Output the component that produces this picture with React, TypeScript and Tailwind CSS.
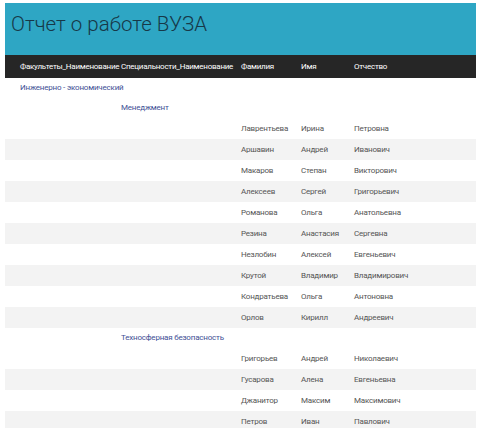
import React from "react";

type Row = { kind: "fac" | "spec" | "p"; a?: string; f?: string; i?: string; o?: string; shade?: boolean };

const rows: Row[] = [
  { kind: "fac", a: "Инженерно - экономический" },
  { kind: "spec", a: "Менеджмент" },
  { kind: "p", f: "Лаврентьева", i: "Ирина", o: "Петровна" },
  { kind: "p", f: "Аршавин", i: "Андрей", o: "Иванович", shade: true },
  { kind: "p", f: "Макаров", i: "Степан", o: "Викторович" },
  { kind: "p", f: "Алексеев", i: "Сергей", o: "Григорьевич", shade: true },
  { kind: "p", f: "Романова", i: "Ольга", o: "Анатольевна" },
  { kind: "p", f: "Резина", i: "Анастасия", o: "Сергевна", shade: true },
  { kind: "p", f: "Незлобин", i: "Алексей", o: "Евгеньевич" },
  { kind: "p", f: "Крутой", i: "Владимир", o: "Владимирович", shade: true },
  { kind: "p", f: "Кондратьева", i: "Ольга", o: "Антоновна" },
  { kind: "p", f: "Орлов", i: "Кирилл", o: "Андреевич", shade: true },
  { kind: "spec", a: "Техносферная безопасность" },
  { kind: "p", f: "Григорьев", i: "Андрей", o: "Николаевич" },
  { kind: "p", f: "Гусарова", i: "Алена", o: "Евгеньевна", shade: true },
  { kind: "p", f: "Джанитор", i: "Максим", o: "Максимович" },
  { kind: "p", f: "Петров", i: "Иван", o: "Павлович", shade: true },
];

export default function App() {
  return (
    <div className="w-[479px] h-[428px] bg-white overflow-hidden pt-[3px] pl-[5px] pr-[3px]" style={{ fontFamily: 'Roboto, "Noto Sans", sans-serif' }}>
      <div className="bg-[#2ea6c4] h-[52px] pl-[6px] pt-[7px]">
        <h1 className="text-[20.5px] leading-[28px] text-[#173848] font-light">Отчет о работе ВУЗА</h1>
      </div>
      <div className="bg-[#262626] h-[23px] flex items-center text-white text-[8px] tracking-[-0.25px] whitespace-nowrap">
        <div className="w-[116px] pl-[15px]">Факультеты_Наименование</div>
        <div className="w-[120px]">Специальности_Наименование</div>
        <div className="w-[60px]">Фамилия</div>
        <div className="w-[53px]">Имя</div>
        <div>Отчество</div>
      </div>
      <div className="text-[8px] tracking-[-0.2px] whitespace-nowrap">
        {rows.map((r, idx) => {
          if (r.kind === "fac")
            return (
              <div key={idx} className="h-[20px] flex items-center pl-[15px] text-[#3e4f95]">{r.a}</div>
            );
          if (r.kind === "spec")
            return (
              <div key={idx} className="h-[20px] flex items-center pl-[116px] text-[#3e4f95]">{r.a}</div>
            );
          return (
            <div key={idx} className={`h-[21px] flex items-center text-[#555555] ${r.shade ? "bg-[#f3f3f3]" : ""}`}>
              <div className="w-[236px]" />
              <div className="w-[60px]">{r.f}</div>
              <div className="w-[53px]">{r.i}</div>
              <div>{r.o}</div>
            </div>
          );
        })}
      </div>
    </div>
  );
}
